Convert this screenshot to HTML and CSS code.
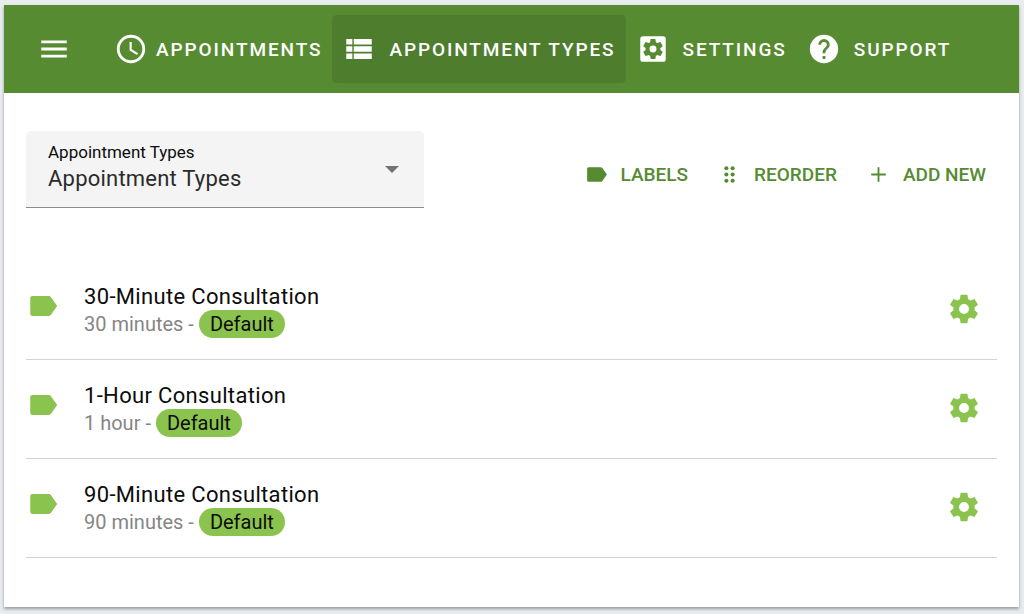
FILE: index.html
```html
<!DOCTYPE html>
<html lang="en">
<head>
<meta charset="utf-8">
<meta name="viewport" content="width=device-width, initial-scale=1">
<title>Appointment Types</title>
<link rel="stylesheet" href="styles.css">
</head>
<body>
<svg class="sprite" aria-hidden="true">
  <symbol id="tag" viewBox="0 0 24 24"><path d="M17.63 5.84C17.27 5.33 16.67 5 16 5H4.5C3.6 5 3 5.6 3 6.5v11c0 .9.6 1.5 1.5 1.5H16c.67 0 1.27-.33 1.63-.84L22 12z"/></symbol>
  <symbol id="gear" viewBox="0 0 24 24"><path d="M12 15.5A3.5 3.5 0 0 1 8.500 12 3.500 3.500 0 0 1 12 8.500a3.500 3.500 0 0 1 3.500 3.500 3.500 3.500 0 0 1-3.500 3.500m7.430-2.530c.04-.32.07-.64.07-.97s-.03-.66-.07-1l2.110-1.630c.19-.15.24-.42.12-.64l-2-3.460c-.12-.22-.39-.31-.61-.22l-2.490 1c-.52-.39-1.060-.73-1.690-.98l-.37-2.650A.506.506 0 0 0 14 2h-4c-.25 0-.46.18-.5.42l-.37 2.650c-.63.25-1.170.59-1.690.98l-2.490-1c-.22-.09-.49 0-.61.22l-2 3.460c-.13.22-.07.49.12.64L4.570 11c-.04.34-.07.67-.07 1s.03.65.07.97l-2.110 1.660c-.19.15-.25.42-.12.64l2 3.460c.12.22.39.3.61.22l2.490-1.010c.52.4 1.060.74 1.690.99l.37 2.650c.04.24.25.42.5.42h4c.25 0 .46-.18.5-.42l.37-2.650c.63-.26 1.170-.59 1.690-.99l2.490 1.010c.22.08.49 0 .61-.22l2-3.460c.12-.22.07-.49-.12-.64z"/></symbol>
</svg>
<div class="card">
  <header class="toolbar">
    <button class="menu" type="button" aria-label="Menu"><svg class="icon" viewBox="0 0 24 24"><path d="M3 6h18v2H3zm0 5h18v2H3zm0 5h18v2H3z"/></svg></button>
    <nav class="tabs">
      <a class="tab tab-tight" href="#"><svg class="icon" viewBox="0 0 24 24"><path d="M12 20a8 8 0 0 0 8-8 8 8 0 0 0-8-8 8 8 0 0 0-8 8 8 8 0 0 0 8 8m0-18a10 10 0 0 1 10 10 10 10 0 0 1-10 10A10 10 0 1 1 12 2m.5 5v5.250l4.500 2.670-.75 1.230L11 13V7z"/></svg>APPOINTMENTS</a>
      <a class="tab tab-active" href="#" aria-current="page"><svg class="icon" viewBox="0 0 24 24"><path d="M3 5h4.300v3.800H3zm5.300 0H21v3.800H8.300zM3 10.100h4.300v3.800H3zm5.300 0H21v3.800H8.300zM3 15.200h4.300V19H3zm5.300 0H21V19H8.300z"/></svg>APPOINTMENT TYPES</a>
      <a class="tab" href="#"><svg class="icon" viewBox="0 0 24 24"><rect x="3" y="3" width="18" height="18" rx="2"/><use class="gear-cut" href="#gear" x="5" y="5" width="14" height="14" transform="translate(-2.400 -2.400) scale(1.200)"/></svg>SETTINGS</a>
      <a class="tab" href="#"><svg class="icon" viewBox="0 0 24 24"><path d="M15.070 11.250l-.9.920C13.450 12.890 13 13.500 13 15h-2v-.5c0-1.110.450-2.110 1.170-2.830l1.240-1.260c.370-.360.590-.860.590-1.410a2 2 0 0 0-4 0H8a4 4 0 0 1 8 0c0 .880-.36 1.670-.93 2.250M13 19h-2v-2h2M12 2a10 10 0 1 0 0 20 10 10 0 0 0 0-20z"/></svg>SUPPORT</a>
    </nav>
  </header>
  <main class="content">
    <div class="controls">
      <div class="field">
        <div class="field-text">
          <label class="field-label" for="view">Appointment Types</label>
          <select class="field-select" id="view"><option>Appointment Types</option></select>
        </div>
        <svg class="arrow" viewBox="0 0 14 7" aria-hidden="true"><path d="M0 0h14L7 7z"/></svg>
      </div>
      <div class="actions">
        <button class="action" type="button"><svg class="icon-small"><use href="#tag"/></svg>LABELS</button>
        <button class="action" type="button"><svg class="icon-small" viewBox="0 0 24 24"><circle cx="9" cy="6" r="2"/><circle cx="15" cy="6" r="2"/><circle cx="9" cy="12" r="2"/><circle cx="15" cy="12" r="2"/><circle cx="9" cy="18" r="2"/><circle cx="15" cy="18" r="2"/></svg>REORDER</button>
        <button class="action" type="button"><svg class="icon-small" viewBox="0 0 24 24"><path d="M19 12.900h-6.100V19h-1.800v-6.100H5v-1.800h6.100V5h1.800v6.100H19z"/></svg>ADD NEW</button>
      </div>
    </div>
    <ul class="list">
      <li class="row">
        <svg class="icon row-tag"><use href="#tag"/></svg>
        <div class="row-text"><div class="row-title">30-Minute Consultation</div><div class="row-sub">30 minutes - <span class="pill">Default</span></div></div>
        <button class="row-gear" type="button" aria-label="Edit 30-Minute Consultation"><svg class="icon"><use href="#gear"/></svg></button>
      </li>
      <li class="row">
        <svg class="icon row-tag"><use href="#tag"/></svg>
        <div class="row-text"><div class="row-title">1-Hour Consultation</div><div class="row-sub">1 hour - <span class="pill">Default</span></div></div>
        <button class="row-gear" type="button" aria-label="Edit 1-Hour Consultation"><svg class="icon"><use href="#gear"/></svg></button>
      </li>
      <li class="row">
        <svg class="icon row-tag"><use href="#tag"/></svg>
        <div class="row-text"><div class="row-title">90-Minute Consultation</div><div class="row-sub">90 minutes - <span class="pill">Default</span></div></div>
        <button class="row-gear" type="button" aria-label="Edit 90-Minute Consultation"><svg class="icon"><use href="#gear"/></svg></button>
      </li>
    </ul>
  </main>
</div>
</body>
</html>
```
FILE: styles.css
```css
* { box-sizing: border-box; }
body {
  margin: 0;
  padding: 5px 5px 7px 4px;
  background: #e9ecef;
  font-family: Roboto, "Liberation Sans", sans-serif;
  color: #0c0c0c;
}
button {
  border: 0;
  padding: 0;
  background: none;
  font: inherit;
  color: inherit;
  cursor: pointer;
}
svg { fill: currentColor; flex: none; display: block; }
.sprite { position: absolute; width: 0; height: 0; }
.icon { width: 34px; height: 34px; }
.icon-small { width: 25px; height: 25px; }
.card {
  min-height: calc(100vh - 12px);
  background: #fff;
  box-shadow: 0 2px 3px rgba(0, 0, 0, 0.35);
}
.toolbar {
  display: flex;
  align-items: center;
  height: 88px;
  padding-left: 33px;
  background: #568b32;
  color: #fff;
}
.menu { margin-right: 33px; }
.tabs { display: flex; }
.tab {
  display: flex;
  align-items: center;
  gap: 13px;
  height: 68px;
  padding: 0 10px;
  border-radius: 5px;
  color: inherit;
  font-size: 19px;
  font-weight: 500;
  letter-spacing: 0.1em;
  text-decoration: none;
  white-space: nowrap;
}
.tab-tight { gap: 8px; }
.tab-active { background: #4e7d2e; }
.gear-cut { fill: #568b32; }
.content { padding: 38px 22px 48px; }
.controls {
  display: flex;
  justify-content: space-between;
  align-items: flex-start;
}
.field {
  display: flex;
  align-items: center;
  width: 41%;
  height: 77px;
  padding: 0 25px 0 22px;
  border-bottom: 1px solid #8c8c8c;
  border-radius: 5px 5px 0 0;
  background: #f4f4f4;
}
.field-text { flex: 1; display: flex; flex-direction: column; padding-bottom: 4px; }
.field-label { font-size: 17px; line-height: 22px; }
.field-select {
  appearance: none;
  width: 100%;
  height: 30px;
  border: 0;
  padding: 0;
  background: none;
  color: #2b2b2b;
  font: 22px Roboto, "Liberation Sans", sans-serif;
  letter-spacing: 0.01em;
}
.arrow { width: 14px; height: 7px; color: #737373; }
.actions { display: flex; gap: 29px; padding: 31px 11px 0 0; }
.action {
  display: flex;
  align-items: center;
  gap: 12px;
  color: #568b32;
  font-size: 19px;
  font-weight: 500;
  white-space: nowrap;
}
.list { list-style: none; margin: 53px 0 0; padding: 0; }
.row {
  display: flex;
  align-items: flex-start;
  height: 99px;
  padding: 23px 16px 0 0;
  border-bottom: 1px solid #d3d3d3;
}
.row-tag { margin: 5px 24px 0 0; color: #8bc34f; }
.row-text { flex: 1; }
.row-title { font-size: 22px; line-height: 26px; letter-spacing: 0.015em; }
.row-sub { display: flex; align-items: center; gap: 5px; color: #858585; font-size: 20px; line-height: 28px; }
.pill {
  padding: 0 11px;
  border-radius: 14px;
  background: #8bc34f;
  color: #0c0c0c;
}
.row-gear { margin-top: 8px; color: #8bc34f; }
```
